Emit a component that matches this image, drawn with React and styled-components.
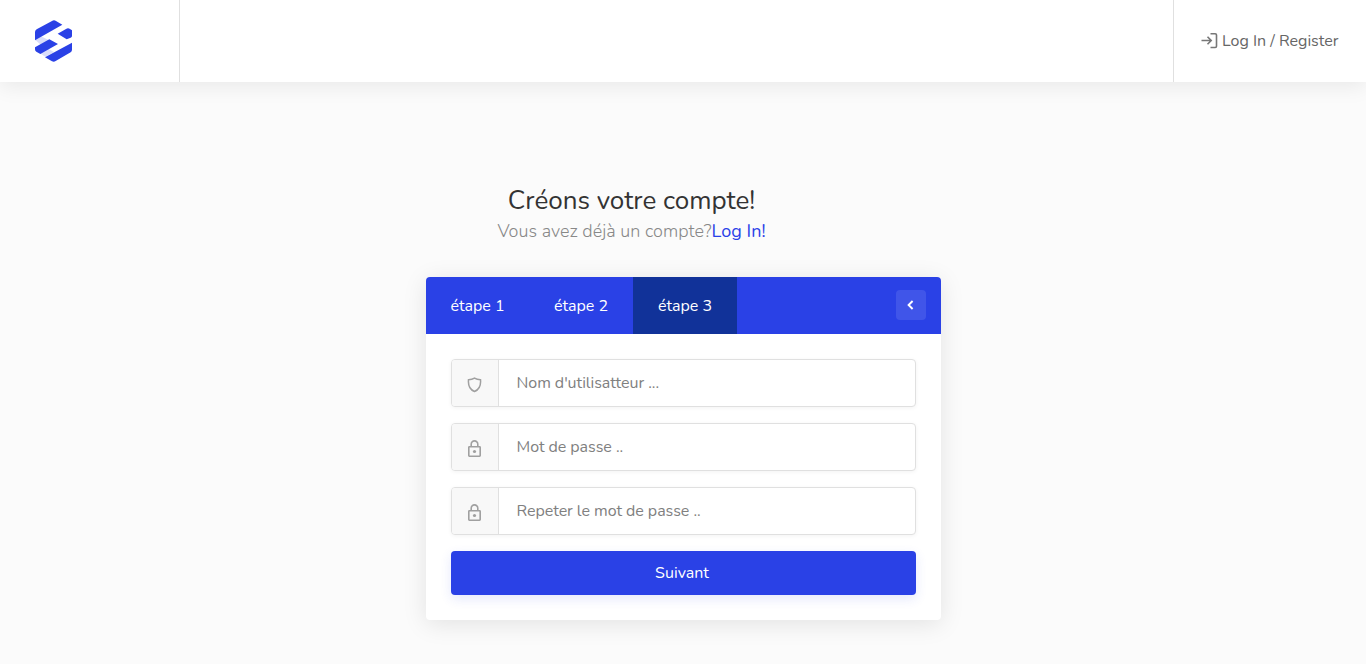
import React from 'react';
import styled, { createGlobalStyle } from 'styled-components';

const GlobalStyle = createGlobalStyle`
  *, *::before, *::after { box-sizing: border-box; }
  body {
    margin: 0;
    min-height: 100vh;
    overflow: hidden;
    background: #fbfbfb;
    color: #707070;
    font-family: Nunito, Lato, 'Open Sans', sans-serif;
    font-size: 16px;
  }
  h3, p { margin: 0; }
`;

const Header = styled.header`
  display: flex;
  justify-content: space-between;
  height: 82px;
  background: #fff;
  box-shadow: 0 4px 20px rgba(0, 0, 0, 0.08);
`;

const LogoArea = styled.div`
  display: flex;
  align-items: center;
  width: 180px;
  padding-left: 35px;
  border-right: 1px solid #e0e0e0;

  svg { display: block; }
`;

const LoginLink = styled.a`
  display: flex;
  align-items: center;
  gap: 4px;
  width: 193px;
  padding-left: 27px;
  border-left: 1px solid #e0e0e0;
  color: #666;
  text-decoration: none;
  white-space: nowrap;

  svg { color: #777; }
`;

const Account = styled.main`
  width: 515px;
  margin: 103px auto 0;
`;

const Intro = styled.div`
  width: 412px;
  text-align: center;
  white-space: nowrap;
`;

const Title = styled.h3`
  color: #333;
  font-size: 26px;
  font-weight: 400;
  line-height: 31px;
`;

const Subtitle = styled.p`
  color: #888;
  font-size: 18px;
  font-weight: 300;
  line-height: 30px;
  letter-spacing: 0.02px;

  a { color: #2a41e8; font-weight: 400; text-decoration: none; }
`;

const Card = styled.section`
  margin-top: 31px;
  border-radius: 4px;
  background: #fff;
  box-shadow: 0 4px 24px rgba(0, 0, 0, 0.1);
`;

const TabBar = styled.nav`
  display: flex;
  align-items: center;
  height: 57px;
  padding-right: 15px;
  border-radius: 4px 4px 0 0;
  background: #2a41e6;
  overflow: hidden;
`;

const Tab = styled.div`
  display: flex;
  align-items: center;
  justify-content: center;
  width: ${(p) => (p.$first ? '103px' : '104px')};
  height: 57px;
  padding-left: 1px;
  background: ${(p) => (p.$active ? '#113299' : 'transparent')};
  color: #fff;
`;

const BackButton = styled.button`
  display: grid;
  place-items: center;
  width: 30px;
  height: 30px;
  margin: 0 0 1px auto;
  padding: 0;
  border: 0;
  border-radius: 4px;
  background: #4055e9;
`;

const Form = styled.div`
  display: flex;
  flex-direction: column;
  gap: 16px;
  padding: 25px;
`;

const Field = styled.label`
  display: flex;
  height: 48px;
  border: 1px solid #e0e0e0;
  border-radius: 4px;
  background: #fff;
  box-shadow: 0 1px 4px rgba(0, 0, 0, 0.05);
  overflow: hidden;
`;

const FieldIcon = styled.span`
  display: flex;
  align-items: center;
  justify-content: center;
  width: 47px;
  padding-top: 3px;
  border-right: 1px solid #e0e0e0;
  background: #f8f8f8;
  color: #a0a0a0;
`;

const Input = styled.input`
  flex: 1;
  min-width: 0;
  padding: 0 18px;
  border: 0;
  outline: 0;
  background: transparent;
  font: inherit;
  letter-spacing: -0.05px;

  &::placeholder { color: #808080; opacity: 1; }
`;

const Submit = styled.button`
  height: 44px;
  padding: 0 2px 0 0;
  border: 0;
  border-radius: 4px;
  background: #2a41e6;
  box-shadow: 0 4px 12px rgba(42, 65, 232, 0.12);
  color: #fff;
  font: inherit;
`;

function Logo() {
  return (
    <svg width="38" height="42" viewBox="0 0 114 126">
      <g fill="#d9ddfa">
        <path d="M0 59 18 49 42 61 18 75Z" />
        <path d="M15 100 39 86 57 96 31 110Z" />
      </g>
      <g fill="#2a41e6">
        <path d="M0 61V36Q0 31 5 28L51 3Q57-1 63 3L82 14Z" />
        <path d="M68 41 93 27Q99 23 105 27L111 31V48Q111 51 107 53L95 58Z" />
        <path d="M43 58 69 72 16 102 4 95Q0 93 0 88V82Z" />
        <path d="M111 68V89Q111 94 107 97L62 123Q57 127 51 124L30 112Z" />
      </g>
    </svg>
  );
}

function LoginIcon() {
  return (
    <svg width="17" height="16" viewBox="0 0 17 16" fill="none" stroke="currentColor" strokeWidth="1.6">
      <path d="M0.5 7.5H10M6.5 3.8 10.2 7.5 6.5 11.2M9.5 0.8H14.2Q15.5 0.8 15.5 2V13.3Q15.5 14.5 14.2 14.5H9.5" />
    </svg>
  );
}

function ShieldIcon() {
  return (
    <svg width="15" height="16" viewBox="0 0 15 16" fill="none" stroke="currentColor" strokeWidth="1.5">
      <path d="M7.5 1.2Q10 2.7 13.5 2.7C14 8 12.2 12.6 7.5 14.5C2.8 12.6 1 8 1.5 2.7Q5 2.7 7.5 1.2Z" />
    </svg>
  );
}

function LockIcon() {
  return (
    <svg width="15" height="18" viewBox="0 0 15 18" fill="none" stroke="currentColor" strokeWidth="1.6">
      <rect x="1.8" y="6.8" width="11.4" height="9.4" rx="0.6" />
      <path d="M4.2 6.5V4.2a3.3 3.3 0 0 1 6.6 0v2.3" />
      <circle cx="7.5" cy="11.5" r="1.6" fill="currentColor" stroke="none" />
    </svg>
  );
}

const FIELDS = [
  { type: 'text', text: "Nom d'utilisatteur ...", Icon: ShieldIcon },
  { type: 'password', text: 'Mot de passe ..', Icon: LockIcon },
  { type: 'password', text: 'Repeter le mot de passe ..', Icon: LockIcon },
];

export default function App() {
  return (
    <>
      <GlobalStyle />
      <Header>
        <LogoArea><Logo /></LogoArea>
        <LoginLink><LoginIcon /><span>Log In / Register</span></LoginLink>
      </Header>
      <Account>
        <Intro>
          <Title>Créons votre compte!</Title>
          <Subtitle>Vous avez déjà un compte?<a>Log In!</a></Subtitle>
        </Intro>
        <Card>
          <TabBar>
            <Tab $first>étape 1</Tab>
            <Tab>étape 2</Tab>
            <Tab $active>étape 3</Tab>
            <BackButton aria-label="Retour">
              <svg width="8" height="10" viewBox="0 0 8 10" fill="none" stroke="#fff" strokeWidth="1.9">
                <path d="M5.6 1 1.6 5l4 4" />
              </svg>
            </BackButton>
          </TabBar>
          <Form>
            {FIELDS.map(({ type, text, Icon }) => (
              <Field key={text}>
                <FieldIcon><Icon /></FieldIcon>
                <Input type={type} placeholder={text} />
              </Field>
            ))}
            <Submit>Suivant</Submit>
          </Form>
        </Card>
      </Account>
    </>
  );
}
